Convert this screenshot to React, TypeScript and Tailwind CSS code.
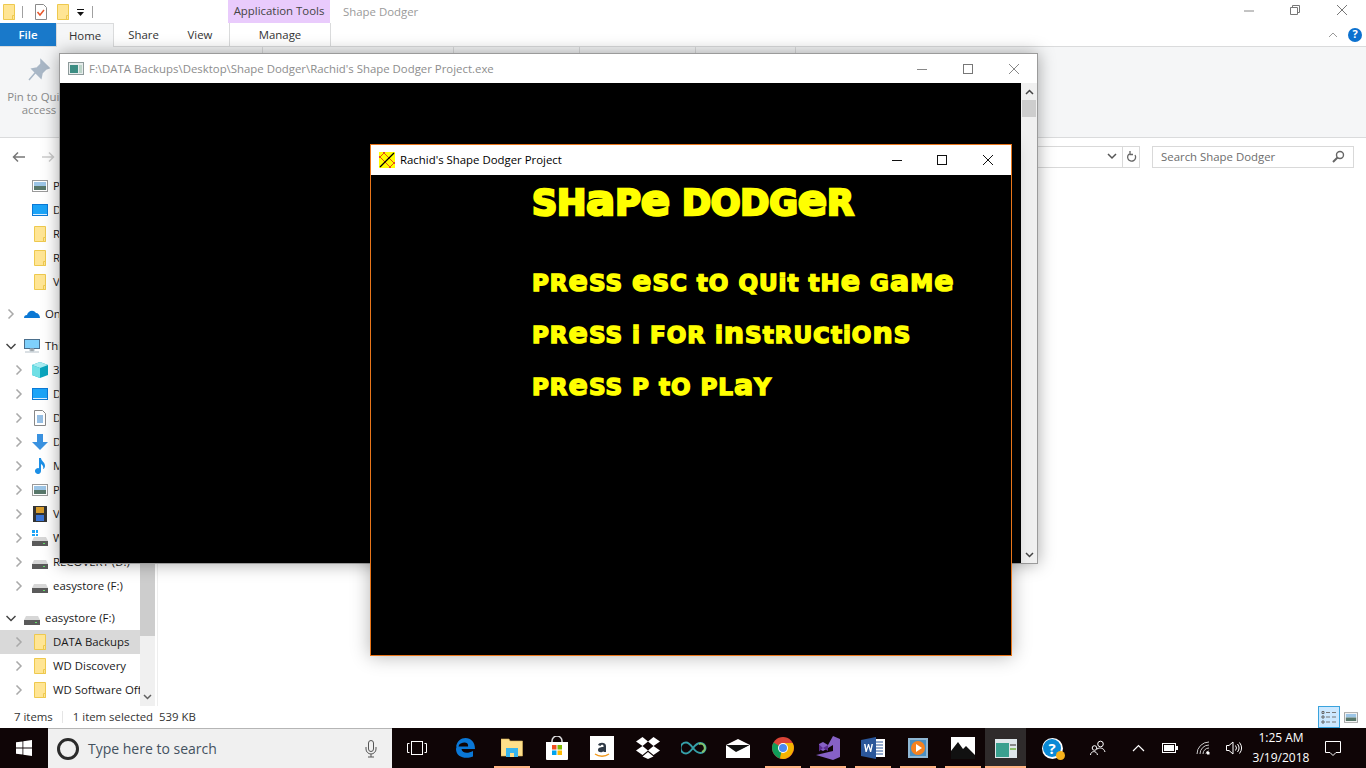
import React from "react";

const Folder = ({ size = 16 }: { size?: number }) => (
  <svg width={size} height={size} viewBox="0 0 16 16" className="shrink-0">
    <path d="M2.500.5h11v15h-11z" fill="#ffe594" stroke="#eec94e" />
    <path d="M11.500 11.500h2v4h-2z" fill="#ffe594" stroke="#eec94e" />
  </svg>
);
const Chevron = ({ open = false, dim = true }: { open?: boolean; dim?: boolean }) => (
  <svg width="10" height="10" viewBox="0 0 10 10" className="shrink-0">
    {open ? (
      <path d="M.5 3l4.500 4.500L9.500 3" fill="none" stroke="#444" strokeWidth="1.500" />
    ) : (
      <path d="M2.500.5L7 5 2.500 9.500" fill="none" stroke={dim ? "#a9a9a9" : "#444"} strokeWidth="1.500" />
    )}
  </svg>
);
const Pic = () => (
  <svg width="16" height="12" viewBox="0 0 16 12">
    <rect x=".5" y=".5" width="15" height="11" fill="#fff" stroke="#9a9a9a" />
    <rect x="2" y="2" width="12" height="4" fill="#9cc5e6" />
    <path d="M2 6h12v4H2z" fill="#58776a" />
  </svg>
);
const Desk = () => (
  <svg width="16" height="12" viewBox="0 0 16 12">
    <rect width="16" height="12" fill="#0b79d6" />
    <rect x="1" y="1" width="14" height="9" fill="#1ca4f7" />
    <rect x="1" y="10" width="14" height="1" fill="#dcefff" />
  </svg>
);
const Drive = () => (
  <svg width="16" height="9" viewBox="0 0 16 9">
    <path d="M2 0h12l2 4H0z" fill="#d7d7d7" />
    <rect y="4" width="16" height="5" fill="#5a5a5a" />
    <rect x="11" y="6" width="2" height="1" fill="#62e06a" />
  </svg>
);

function Row({
  indent,
  icon,
  text,
  chev = true,
  open = false,
  sel = false,
}: {
  indent: number;
  icon: React.ReactNode;
  text: string;
  chev?: boolean;
  open?: boolean;
  sel?: boolean;
}) {
  return (
    <div className={`h-6 flex items-center text-[#1a1a1a] whitespace-nowrap overflow-hidden ${sel ? "bg-[#d9d9d9]" : ""}`}>
      <div style={{ width: indent }} className="shrink-0 flex justify-end pr-[4px]">
        {chev && <Chevron open={open} dim={!open} />}
      </div>
      <div className="w-[24px] shrink-0 flex justify-center items-center">{icon}</div>
      <span className="ml-[1px]">{text}</span>
    </div>
  );
}

const Tri = ({ c }: { c: string }) => <span className={c} />;

function TaskIcon({ children, w = 45, under = false, active = false }: { children: React.ReactNode; w?: number; under?: boolean; active?: boolean }) {
  return (
    <div style={{ width: w }} className={`h-full shrink-0 relative flex items-center justify-center ${active ? "bg-[#2f2b2b]" : ""}`}>
      {children}
      {under && <div className={`absolute bottom-0 h-[2px] bg-[#ffb483] ${active ? "inset-x-0" : "left-[5px] right-[4px]"}`} />}
    </div>
  );
}

/* The game's lettering is unicase: lowercase runs are enlarged to stand as tall as the capitals. */
function GameText({ text }: { text: string }) {
  const parts = text.split(/([aecnus]+)/);
  return (
    <>
      {parts.map((p, i) =>
        /^[aecnus]+$/.test(p) ? (
          <span key={i} className="text-[1.24em] leading-none">{p}</span>
        ) : (
          <React.Fragment key={i}>{p}</React.Fragment>
        )
      )}
    </>
  );
}

const gameFont = "font-['DejaVu_Sans'] font-bold text-[#ffff00] whitespace-nowrap";
const lineCls = "text-[23px] leading-[30px] tracking-[1px] [-webkit-text-stroke:1.5px_#ffff00] [stroke-linejoin:round] [paint-order:stroke]";

export default function App() {
  return (
    <div className="relative w-[1366px] h-[768px] overflow-hidden bg-white font-['Open_Sans','Noto_Sans',sans-serif] text-[11.4px] flex flex-col">
      {/* Title bar */}
      <div className="h-[23px] flex items-center relative shrink-0">
        <div className="ml-[1px]"><Folder /></div>
        <div className="ml-[5px] w-px h-[12px] bg-[#a0a0a0]" />
        <svg width="14" height="16" viewBox="0 0 14 16" className="ml-[11px]">
          <path d="M1.500.5h8l3 3v12h-11z" fill="#fff" stroke="#8a8a8a" />
          <path d="M3.500 8l2.500 3 4-5" fill="none" stroke="#e8562a" strokeWidth="1.500" />
        </svg>
        <div className="ml-[7px]"><Folder /></div>
        <svg width="8" height="8" viewBox="0 0 8 8" className="ml-[6px] mt-[3px]">
          <rect y="0" width="7" height="1" fill="#111" />
          <path d="M0 3h7L3.500 7z" fill="#111" />
        </svg>
        <div className="ml-[7px] w-px h-[12px] bg-[#a0a0a0]" />
        <div className="ml-[135px] w-[102px] h-[23px] bg-[#e9cbfc] text-[#444] flex items-center justify-center pb-[2px]">Application Tools</div>
        <div className="ml-[13px] text-[#9a9a9a]">Shape Dodger</div>
        <div className="ml-auto flex items-center h-full text-[#555] pb-[3px]">
          <svg width="12" height="12" viewBox="0 0 12 12"><path d="M1 7h10" stroke="#888" /></svg>
          <svg width="12" height="12" viewBox="0 0 12 12" className="ml-[34px]"><path d="M1.500 3.500h7v7h-7zM3.500 3.500v-2h7v7h-2" fill="none" stroke="#777" /></svg>
          <svg width="12" height="12" viewBox="0 0 12 12" className="ml-[35px] mr-[18px]"><path d="M1 1l10 10M11 1L1 11" stroke="#777" /></svg>
        </div>
      </div>
      {/* Tabs */}
      <div className="h-[24px] flex shrink-0 items-stretch relative border-b border-[#dadbdc]">
        <div className="w-[56px] bg-[#1979ca] text-white font-semibold flex items-center justify-center">File</div>
        <div className="w-[58px] h-[24px] bg-[#f5f6f7] border-x border-t border-[#dadbdc] flex items-center justify-center text-[#333]">Home</div>
        <div className="w-[59px] flex items-center justify-center text-[#333]">Share</div>
        <div className="w-[54px] flex items-center justify-center text-[#333] mr-[2px]">View</div>
        <div className="w-[102px] border-x border-[#dadbdc] flex items-center justify-center text-[#333]">Manage</div>
        <div className="ml-auto flex items-center mr-[4px]">
          <svg width="10" height="6" viewBox="0 0 10 6" className="mr-[10px]"><path d="M1 5l4-4 4 4" fill="none" stroke="#999" /></svg>
          <div className="w-[14px] h-[14px] rounded-full bg-[#0c71cf] text-white font-bold text-[11px] flex items-center justify-center">?</div>
        </div>
      </div>
      {/* Ribbon */}
      <div className="h-[91px] shrink-0 bg-[#f5f6f7] border-b border-[#dadbdc] flex relative">
        <div className="w-[78px] flex flex-col items-center pt-[11px] text-[#8a8a8a] leading-[13px]">
          <svg width="24" height="24" viewBox="0 0 24 24">
            <path d="M14 2l8 8-3 1-4 4-1 5-9-9 5-1 4-4zM8 15l-6 7" fill="#a9b7c6" stroke="#a9b7c6" strokeWidth="1.500" />
          </svg>
          <span className="mt-[8px] whitespace-nowrap">Pin to Quick</span>
          <span>access</span>
        </div>
        <div className="absolute left-[262px] top-0 w-px h-[80px] bg-[#dadbdc]" />
        <div className="absolute left-[453px] top-0 w-px h-[80px] bg-[#dadbdc]" />
        <div className="absolute left-[579px] top-0 w-px h-[80px] bg-[#dadbdc]" />
        <div className="absolute left-[695px] top-0 w-px h-[80px] bg-[#dadbdc]" />
        <div className="absolute left-[795px] top-0 w-px h-[80px] bg-[#dadbdc]" />
      </div>
      {/* Address bar */}
      <div className="h-[37px] shrink-0 flex items-center relative">
        <svg width="14" height="12" viewBox="0 0 14 12" className="ml-[12px]"><path d="M13 6H2M6 1.500L1.500 6 6 10.500" fill="none" stroke="#777" strokeWidth="1.500" /></svg>
        <svg width="14" height="12" viewBox="0 0 14 12" className="ml-[15px]"><path d="M1 6h11M8 1.500L12.500 6 8 10.500" fill="none" stroke="#ccc" strokeWidth="1.500" /></svg>
        <div className="ml-auto flex items-center mr-[12px]">
          <div className="w-[106px] h-[22px] border border-[#d9d9d9] border-l-0 flex items-center justify-end">
            <svg width="10" height="7" viewBox="0 0 10 7" className="mr-[5px]"><path d="M1 1l4 4 4-4" fill="none" stroke="#555" strokeWidth="1.500" /></svg>
            <div className="w-[17px] h-full border-l border-[#d9d9d9] flex items-center justify-center">
              <svg width="11" height="12" viewBox="0 0 11 12"><path d="M9 4a4 4 0 1 1-5-1.500M4 0v3.500h3" fill="none" stroke="#666" strokeWidth="1.300" /></svg>
            </div>
          </div>
          <div className="ml-[12px] w-[202px] h-[22px] border border-[#d9d9d9] flex items-center pl-[8px] pr-[8px] text-[#6d6d6d]">
            Search Shape Dodger
            <svg width="13" height="13" viewBox="0 0 13 13" className="ml-auto"><circle cx="8" cy="5" r="3.500" fill="none" stroke="#666" strokeWidth="1.400" /><path d="M5.500 7.500L1 12" stroke="#666" strokeWidth="2" /></svg>
          </div>
        </div>
      </div>
      {/* Body */}
      <div className="h-[531px] shrink-0 flex">
        <div className="w-[140px] shrink-0 overflow-hidden">
          <div className="-mt-px">
            <Row indent={28} icon={<Pic />} text="Pictures" chev={false} />
            <Row indent={28} icon={<Desk />} text="Desktop" chev={false} />
            <Row indent={28} icon={<Folder />} text="Rachid" chev={false} />
            <Row indent={28} icon={<Folder />} text="Rachid's" chev={false} />
            <Row indent={28} icon={<Folder />} text="Videos" chev={false} />
            <div className="h-2" />
            <Row indent={20} icon={
              <svg width="16" height="10" viewBox="0 0 16 10"><path d="M0 9c0-2 1-3 3-3 1-4 6-6 9-2 2 0 4 2 4 5z" fill="#0b78d4" /></svg>
            } text="OneDrive" />
            <div className="h-2" />
            <Row indent={20} open icon={
              <svg width="16" height="14" viewBox="0 0 16 14"><rect x=".5" y=".5" width="15" height="9" fill="#7fd0fb" stroke="#4b6f8c" /><path d="M6 10h4v2H6zM1 13h14" fill="#888" stroke="#b5c0c8" /></svg>
            } text="This PC" />
            <Row indent={28} icon={
              <svg width="16" height="16" viewBox="0 0 16 16"><path d="M8 0l8 3v10l-8 3-8-3V3z" fill="#0aa5bd" /><path d="M8 0l8 3-8 3-8-3z" fill="#a8ecf1" /><path d="M0 3l8 3v10l-8-3z" fill="#6fdfe5" /></svg>
            } text="3D Objects" />
            <Row indent={28} icon={<Desk />} text="Desktop" />
            <Row indent={28} icon={
              <svg width="12" height="16" viewBox="0 0 12 16"><path d="M.5.5h8l3 3v12H.5z" fill="#fff" stroke="#888" /><path d="M3 6h6M3 8h6M3 10h6M3 12h6" stroke="#2c7fc9" /></svg>
            } text="Documents" />
            <Row indent={28} icon={
              <svg width="16" height="16" viewBox="0 0 16 16"><path d="M5 0h6v8h5l-8 8-8-8h5z" fill="#3a92e0" /></svg>
            } text="Downloads" />
            <Row indent={28} icon={
              <svg width="14" height="16" viewBox="0 0 14 16"><path d="M6 0h2c0 3 4 4 4 8 0 1-1 3-2 3 1-3-1-4-2-5v7a3 3 0 1 1-2-2.800z" fill="#1c8fe6" /></svg>
            } text="Music" />
            <Row indent={28} icon={<Pic />} text="Pictures" />
            <Row indent={28} icon={
              <svg width="14" height="16" viewBox="0 0 14 16"><rect width="14" height="16" fill="#333" /><rect x="3" y="1" width="8" height="6" fill="#d79c2c" /><rect x="3" y="9" width="8" height="6" fill="#3a74d6" /></svg>
            } text="Videos" />
            <Row indent={28} icon={
              <div className="relative w-4 h-4 flex items-end"><Drive /><div className="absolute left-0 top-0 w-[6px] h-[6px] grid grid-cols-2 gap-[1px]"><Tri c="bg-[#1ca4f7]" /><Tri c="bg-[#1ca4f7]" /><Tri c="bg-[#1ca4f7]" /><Tri c="bg-[#1ca4f7]" /></div></div>
            } text="Windows (C:)" />
            <Row indent={28} icon={<div className="pt-[5px]"><Drive /></div>} text="RECOVERY (D:)" />
            <Row indent={28} icon={<div className="pt-[5px]"><Drive /></div>} text="easystore (F:)" />
            <div className="h-2" />
            <Row indent={20} open icon={<div className="pt-[5px]"><Drive /></div>} text="easystore (F:)" />
            <Row indent={28} sel icon={<Folder />} text="DATA Backups" />
            <Row indent={28} icon={<Folder />} text="WD Discovery" />
            <Row indent={28} icon={<Folder />} text="WD Software Offline" />
          </div>
        </div>
        <div className="w-[15px] shrink-0 bg-[#f0f0f0] flex flex-col justify-between">
          <div className="h-[461px] bg-[#cdcdcd]" />
          <div className="h-[19px] flex items-center justify-center">
            <svg width="9" height="6" viewBox="0 0 9 6"><path d="M1 1l3.500 3.500L8 1" fill="none" stroke="#606060" strokeWidth="1.500" /></svg>
          </div>
        </div>
        <div className="ml-[2px] w-px bg-[#eeeeee]" />
      </div>
      {/* Status bar */}
      <div className="h-[22px] shrink-0 flex items-center text-[#333] relative">
        <span className="ml-[14px]">7 items</span>
        <div className="ml-[9px] w-px h-[12px] bg-[#e5e5e5]" />
        <span className="ml-[10px]">1 item selected</span>
        <span className="ml-[6px]">539 KB</span>
        <div className="ml-auto flex items-center mr-[8px]">
          <div className="w-[22px] h-[22px] bg-[#cce8ff] border border-[#3aa3dd] flex items-center justify-center">
            <svg width="16" height="14" viewBox="0 0 16 14"><path d="M1 1.500h2v2H1zM1 6h2v2H1zM1 11h2v2H1z" fill="none" stroke="#666" /><path d="M5 2.500h4M11 2.500h4M5 7h4M11 7h4M5 12h4M11 12h4" stroke="#777" /></svg>
          </div>
          <div className="ml-[4px] w-[14px] flex"><svg width="14" height="11" viewBox="0 0 16 12"><rect x=".5" y=".5" width="15" height="11" fill="#fff" stroke="#9a9a9a" /><rect x="2" y="2" width="12" height="4" fill="#9cc5e6" /><path d="M2 6h12v4H2z" fill="#58776a" /></svg></div>
        </div>
      </div>
      {/* Taskbar */}
      <div className="h-[40px] shrink-0 bg-[#0f0506] flex items-center">
        <div className="w-[48px] h-full flex items-center justify-center">
          <svg width="16" height="16" viewBox="0 0 16 16"><path d="M0 2.300l6.500-.9v6.200H0zM7.300 1.300L16 0v7.600H7.300zM0 8.400h6.500v6.200L0 13.700zM7.300 8.400H16V16l-8.700-1.300z" fill="#fff" /></svg>
        </div>
        <div className="w-[344px] h-full bg-[#f0f0f0] border-t border-[#b5b5b5] flex items-center">
          <div className="ml-[9px] w-[22px] h-[22px] rounded-full border-[3px] border-[#2b2b2b]" />
          <span className="ml-[9px] text-[14px] text-[#44525f]">Type here to search</span>
          <svg width="12" height="18" viewBox="0 0 12 18" className="ml-auto mr-[15px]"><rect x="3.500" y=".5" width="5" height="11" rx="2.500" fill="none" stroke="#555" /><path d="M1 7v2a5 5 0 0 0 10 0V7M6 14v3M3 17h6" fill="none" stroke="#555" /></svg>
        </div>
        <TaskIcon w={49}>
          <svg width="20" height="14" viewBox="0 0 20 14"><rect x="4.500" y=".5" width="11" height="13" fill="none" stroke="#fff" /><path d="M2.500 2.500H.5v9h2M17.500 2.500h2v9h-2" fill="none" stroke="#fff" /></svg>
        </TaskIcon>
        <TaskIcon w={48}>
          <svg width="20" height="20" viewBox="0 0 20 20"><path d="M1 9C2 3 6 0 10.500 0 16 0 20 4 20 11H6.500c.3 4 6 5 11.500 2v5.500c-7 3-17 1-17-7.500 0-1 .5-2 1-3 1-2 3-3.500 5-4-2 1-3 3-3.500 4.500h9.500C14 4 8 2 1 9z" fill="#0a78d7" /></svg>
        </TaskIcon>
        <TaskIcon w={45} under>
          <svg width="22" height="20" viewBox="0 0 22 20"><path d="M0 1h8l1 2h12.500v15H0z" fill="#ffe08a" stroke="#d9b45a" strokeWidth=".6" /><rect x="5" y="10" width="12" height="9" fill="#38b6ee" /><rect x="9" y="15" width="4" height="4" fill="#ffe08a" /></svg>
        </TaskIcon>
        <TaskIcon w={45}>
          <div className="relative">
            <svg width="24" height="24" viewBox="0 0 24 24"><path d="M7 8V5a5 5 0 0 1 10 0v3" fill="none" stroke="#ddd" strokeWidth="1.500" /><path d="M1 6h22v17a1 1 0 0 1-1 1H2a1 1 0 0 1-1-1z" fill="#fff" /><rect x="7" y="9" width="4.500" height="4.500" fill="#f25022" /><rect x="12.500" y="9" width="4.500" height="4.500" fill="#7fba00" /><rect x="7" y="14.500" width="4.500" height="4.500" fill="#00a4ef" /><rect x="12.500" y="14.500" width="4.500" height="4.500" fill="#ffb900" /></svg>
          </div>
        </TaskIcon>
        <TaskIcon w={46}>
          <svg width="24" height="24" viewBox="0 0 24 24"><rect width="24" height="24" fill="#fff" /><path d="M8 9c1-3 8-3 8 1v6h-2.500v-1c-1.500 2-5.500 1.500-5.500-1 0-3 4-3 5.500-3v-1c0-2-2.500-1.500-3 0z" fill="#2f3a46" /><path d="M5 18c4 3 10 3 14 0" fill="none" stroke="#f39a1d" strokeWidth="1.300" /></svg>
        </TaskIcon>
        <TaskIcon w={46}>
          <svg width="24" height="22" viewBox="0 0 24 22"><path d="M6.500 0L0 4.500 6.500 9 12 4.500zM17.500 0L12 4.500 17.500 9 24 4.500zM0 13.500L6.500 18 12 13.500 6.500 9zM24 13.500L17.500 9 12 13.500l5.500 4.500zM6.500 19.500L12 22l5.500-2.500L12 15z" fill="#fff" /></svg>
        </TaskIcon>
        <TaskIcon w={45}>
          <svg width="26" height="14" viewBox="0 0 26 14"><path d="M12 7c-3-4-5-5.500-7-5.500a5.500 5.500 0 0 0 0 11C7 12.500 9 11 12 7c3-4 5-5 7.500-5a5 5 0 0 1 0 10C17 12 15 11 12 7z" fill="none" stroke="#35a0a8" strokeWidth="2" /><path d="M18 3a4 4 0 0 1 3 8" fill="none" stroke="#85c46a" strokeWidth="2" /></svg>
        </TaskIcon>
        <TaskIcon w={44}>
          <svg width="24" height="19" viewBox="0 0 24 19"><path d="M0 6l12-6 12 6v13H0z" fill="#fff" /><path d="M0 6h24L10 13z" fill="#111" /><path d="M24 6L14 12l10 5z" fill="#fff" /></svg>
        </TaskIcon>
        <TaskIcon w={45} under>
          <svg width="22" height="22" viewBox="0 0 22 22"><circle cx="11" cy="11" r="11" fill="#db4437" /><path d="M11 11L1.500 5.500A11 11 0 0 0 8 21.500z" fill="#0f9d58" /><path d="M11 6h9.600A11 11 0 0 1 8 21.500z" fill="#f4b400" /><circle cx="11" cy="11" r="5" fill="#fff" /><circle cx="11" cy="11" r="4" fill="#4a8af0" /></svg>
        </TaskIcon>
        <TaskIcon w={45} under>
          <svg width="24" height="24" viewBox="0 0 24 24"><path d="M17 0l7 3v18l-7 3L0 19l17-4V9L7 15l-4-2V8l4-2 5 3z" fill="#8661c5" /><path d="M3 8.500l4 3.500-4 3.500zM7 12l5-3v6z" fill="#5c2d91" /></svg>
        </TaskIcon>
        <TaskIcon w={45} under>
          <svg width="24" height="22" viewBox="0 0 24 22"><rect x="12" y="2" width="12" height="18" fill="#fff" /><path d="M14 5h8M14 8h8M14 11h8M14 14h8M14 17h8" stroke="#2b579a" /><path d="M0 3l15-3v22L0 19z" fill="#2b579a" /><path d="M3 7l1.500 8h1.200L7.500 9.500 9 15h1.200L12 7h-1.500l-1 5L8 7H7l-1.500 5-1-5z" fill="#fff" /></svg>
        </TaskIcon>
        <TaskIcon w={45} under>
          <svg width="20" height="20" viewBox="0 0 20 20"><rect width="20" height="20" fill="#8fb7d3" /><rect x="2" y="2" width="16" height="16" fill="#4a8fc2" /><circle cx="10" cy="10" r="7" fill="#f58220" /><path d="M8 6l6 4-6 4z" fill="#fff" /></svg>
        </TaskIcon>
        <TaskIcon w={45} under>
          <svg width="24" height="22" viewBox="0 0 24 22"><rect width="24" height="22" fill="#fff" /><path d="M0 14l7-9 5 7 3-3 9 9v4H0z" fill="#111" /></svg>
        </TaskIcon>
        <TaskIcon w={41} under active>
          <svg width="22" height="19" viewBox="0 0 22 19"><rect width="22" height="19" fill="#dfe7ea" /><rect x="1" y="4" width="13" height="14" fill="#3aa08f" /><rect x="15" y="5" width="6" height="2" fill="#888" /><rect x="15" y="9" width="6" height="2" fill="#8cbf6a" /></svg>
        </TaskIcon>
        <TaskIcon w={52}>
          <div className="relative w-[21px] h-[21px] rounded-full bg-white flex items-center justify-center">
            <div className="w-[18px] h-[18px] rounded-full bg-[#0a8ad6] text-white font-bold text-[15px] leading-[18px] text-center">?</div>
            <div className="absolute -right-[2px] -bottom-[1px] w-[9px] h-[9px] rounded-full bg-[#f6b21b]" />
          </div>
        </TaskIcon>
        <TaskIcon w={40}>
          <svg width="16" height="16" viewBox="0 0 16 16"><circle cx="10.500" cy="4" r="2.800" fill="none" stroke="#fff" /><path d="M7 9c3-2 7-1 8 3" fill="none" stroke="#fff" /><circle cx="4.500" cy="8" r="2.300" fill="none" stroke="#fff" /><path d="M.5 15c0-4 6-5 7 0" fill="none" stroke="#fff" /></svg>
        </TaskIcon>
        <TaskIcon w={40}>
          <svg width="13" height="8" viewBox="0 0 13 8"><path d="M1 7l5.500-5.500L12 7" fill="none" stroke="#fff" strokeWidth="1.200" /></svg>
        </TaskIcon>
        <TaskIcon w={24}>
          <svg width="16" height="10" viewBox="0 0 16 10"><rect x=".5" y=".5" width="13" height="9" fill="none" stroke="#fff" /><rect x="2" y="2" width="10" height="6" fill="#fff" /><rect x="14" y="3" width="2" height="4" fill="#fff" /></svg>
        </TaskIcon>
        <TaskIcon w={44}>
          <svg width="16" height="14" viewBox="0 0 16 14"><path d="M1 13A12 12 0 0 1 13 1M4 13a9 9 0 0 1 9-9M7 13a6 6 0 0 1 6-6M10 13a3 3 0 0 1 3-3" fill="none" stroke="#ccc" /><rect x="11" y="11" width="2.500" height="2.500" fill="#fff" /></svg>
        </TaskIcon>
        <TaskIcon w={16}>
          <svg width="16" height="14" viewBox="0 0 16 14"><path d="M.5 4.500h2.500L7 1v12L3 9.500H.5z" fill="none" stroke="#fff" /><path d="M9.500 4.500a4 4 0 0 1 0 5M11.500 3a6.500 6.500 0 0 1 0 8M13.500 1.500a9 9 0 0 1 0 11" fill="none" stroke="#fff" /></svg>
        </TaskIcon>
        <div className="w-[80px] shrink-0 -ml-[1px] text-white text-[12px] leading-[20px] text-center">
          <div>1:25 AM</div>
          <div>3/19/2018</div>
        </div>
        <div className="ml-[4px]">
          <svg width="16" height="15" viewBox="0 0 16 15" className="block"><path d="M.5.5h15v11H11L8 14.500 5 11.500H.5z" fill="none" stroke="#fff" /></svg>
        </div>
      </div>

      {/* Console window */}
      <div className="absolute left-[59px] top-[53px] w-[979px] h-[511px] bg-white border border-[#9b9b9b] shadow-[0_0_16px_rgba(0,0,0,0.35)] flex flex-col">
        <div className="h-[29px] shrink-0 flex items-center text-[#8d8d8d]">
          <svg width="16" height="13" viewBox="0 0 16 13" className="ml-[8px]"><rect x=".5" y=".5" width="15" height="12" fill="#e6ecec" stroke="#8d9a9a" /><rect x="2" y="3" width="8" height="8" fill="#3c8d83" /><rect x="11" y="3" width="3" height="8" fill="#bcd4c8" /></svg>
          <span className="ml-[5px]">F:\DATA Backups\Desktop\Shape Dodger\Rachid's Shape Dodger Project.exe</span>
          <div className="ml-auto flex items-center mr-[17px]">
            <svg width="12" height="12" viewBox="0 0 12 12"><path d="M1 6.500h10" stroke="#888" /></svg>
            <svg width="12" height="12" viewBox="0 0 12 12" className="ml-[34px]"><rect x="1.500" y="1.500" width="9" height="9" fill="none" stroke="#777" /></svg>
            <svg width="12" height="12" viewBox="0 0 12 12" className="ml-[34px]"><path d="M1 1l10 10M11 1L1 11" stroke="#888" /></svg>
          </div>
        </div>
        <div className="flex-1 flex min-h-0">
          <div className="flex-1 bg-black" />
          <div className="w-[16px] bg-[#f0f0f0] flex flex-col">
            <div className="h-[17px] flex items-center justify-center">
              <svg width="9" height="6" viewBox="0 0 9 6"><path d="M1 5l3.500-3.500L8 5" fill="none" stroke="#444" strokeWidth="1.500" /></svg>
            </div>
            <div className="h-[17px] mx-[1px] bg-[#cdcdcd]" />
            <div className="mt-auto h-[17px] flex items-center justify-center">
              <svg width="9" height="6" viewBox="0 0 9 6"><path d="M1 1l3.500 3.500L8 1" fill="none" stroke="#444" strokeWidth="1.500" /></svg>
            </div>
          </div>
        </div>
      </div>

      {/* Game window */}
      <div className="absolute left-[370px] top-[144px] w-[642px] h-[512px] border border-[#e8751a] bg-white shadow-[0_0_18px_rgba(0,0,0,0.3)] flex flex-col">
        <div className="h-[30px] shrink-0 flex items-center text-black">
          <svg width="16" height="16" viewBox="0 0 16 16" className="ml-[8px]">
            <rect width="16" height="16" fill="#ffff00" />
            <path d="M0 6l6-6M10 16l6-6M4 0l12 12M0 4l12 12" stroke="#e02020" strokeWidth=".8" />
            <path d="M1 15L15 1" stroke="#000" strokeWidth="1.200" />
          </svg>
          <span className="ml-[5px]">Rachid's Shape Dodger Project</span>
          <div className="ml-auto flex items-center mr-[17px]">
            <svg width="12" height="12" viewBox="0 0 12 12"><path d="M1 6.500h10" stroke="#111" /></svg>
            <svg width="12" height="12" viewBox="0 0 12 12" className="ml-[33px]"><rect x="1.500" y="1.500" width="9" height="9" fill="none" stroke="#111" /></svg>
            <svg width="12" height="12" viewBox="0 0 12 12" className="ml-[34px]"><path d="M1 1l10 10M11 1L1 11" stroke="#111" /></svg>
          </div>
        </div>
        <div className="flex-1 bg-black pl-[161px] pt-[4px] flex flex-col">
          <div className={`${gameFont} h-[38px] text-[35px] leading-[38px] tracking-[-0.2px] [-webkit-text-stroke:2.500px_#ffff00] [stroke-linejoin:round] [paint-order:stroke]`}><GameText text="SHaPe DODGeR" /></div>
          <div className={`${gameFont} ${lineCls} mt-[51px] h-[30px]`}><GameText text="PReSS eSC tO QUit tHe GaMe" /></div>
          <div className={`${gameFont} ${lineCls} mt-[22px] h-[30px]`}><GameText text="PReSS i FOR inStRUctiOnS" /></div>
          <div className={`${gameFont} ${lineCls} mt-[22px] h-[30px]`}><GameText text="PReSS P tO PLaY" /></div>
        </div>
      </div>
    </div>
  );
}
